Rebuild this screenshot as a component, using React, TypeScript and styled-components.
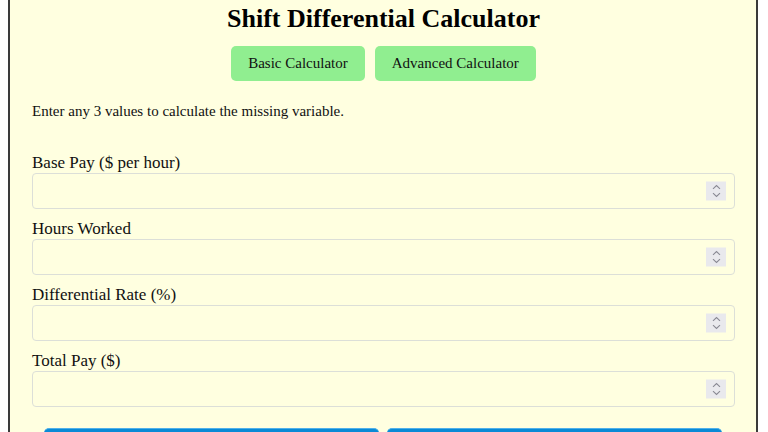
import React from "react";
import styled, { createGlobalStyle } from "styled-components";

const GlobalStyle = createGlobalStyle`
  html, body {
    margin: 0;
    padding: 0;
    background: #ffffff;
  }
  body {
    margin: 0 8px 8px 8px;
    font-family: "Liberation Serif", "Times New Roman", serif;
    color: #111;
  }
`;

const Container = styled.div`
  width: 750px;
  box-sizing: border-box;
  background: #ffffe0;
  border: 2px solid #3a3a3a;
  border-top: none;
  padding: 4px 21px 20px 22px;
`;

const Title = styled.h1`
  margin: 0;
  font-size: 26px;
  font-weight: bold;
  text-align: center;
  line-height: 30px;
  color: #000;
`;

const TabRow = styled.div`
  display: flex;
  justify-content: center;
  gap: 10px;
  margin-top: 12px;
`;

const TabButton = styled.button`
  height: 35px;
  padding: 0 17px;
  border: none;
  border-radius: 5px;
  background: #90ee90;
  font-family: "Liberation Serif", "Times New Roman", serif;
  font-size: 15px;
  color: #111;
  cursor: pointer;
`;

const Intro = styled.p`
  margin: 22px 0 33px 0;
  font-size: 15px;
  line-height: 17px;
  color: #111;
`;

const Field = styled.div`
  margin-bottom: 10px;
`;

const Label = styled.label`
  display: block;
  font-size: 17px;
  line-height: 20px;
  color: #111;
`;

const InputWrap = styled.div`
  position: relative;
`;

const NumberInput = styled.input`
  display: block;
  width: 100%;
  height: 36px;
  box-sizing: border-box;
  border: 1px solid #dcdfd8;
  border-radius: 4px;
  background: transparent;
  padding: 8px;
  font-family: "Liberation Serif", "Times New Roman", serif;
  font-size: 16px;
  -moz-appearance: textfield;
  appearance: textfield;
  &::-webkit-outer-spin-button,
  &::-webkit-inner-spin-button {
    -webkit-appearance: none;
    margin: 0;
  }
`;

const Spinner = styled.span`
  position: absolute;
  right: 9px;
  top: 50%;
  transform: translateY(-50%);
  width: 20px;
  height: 19px;
  background: #e9e9ed;
  display: flex;
  flex-direction: column;
  align-items: center;
  justify-content: center;
  gap: 3px;
  pointer-events: none;
`;

const ActionRow = styled.div`
  display: flex;
  gap: 8px;
  padding: 0 13px 0 12px;
  margin-top: 21px;
`;

const ActionButton = styled.button`
  flex: 1;
  height: 46px;
  padding: 12px 0;
  border: none;
  border-top: 1px solid #4fb0ea;
  border-radius: 5px;
  background: #0a8ad6;
  color: #fff;
  font-family: "Liberation Serif", "Times New Roman", serif;
  font-size: 16px;
  line-height: 20px;
`;

const Chevron: React.FC<{ up?: boolean }> = ({ up }) => (
  <svg width="9" height="5" viewBox="0 0 9 5" fill="none">
    <path
      d={up ? "M1 4.3 L4.5 1 L8 4.3" : "M1 0.7 L4.5 4 L8 0.7"}
      stroke="#8a8a94"
      strokeWidth="1.1"
    />
  </svg>
);

const fields = [
  { id: "base", label: "Base Pay ($ per hour)" },
  { id: "hours", label: "Hours Worked" },
  { id: "rate", label: "Differential Rate (%)" },
  { id: "total", label: "Total Pay ($)" },
];

export default function App() {
  return (
    <>
      <GlobalStyle />
      <Container>
        <Title>Shift Differential Calculator</Title>
        <TabRow>
          <TabButton>Basic Calculator</TabButton>
          <TabButton>Advanced Calculator</TabButton>
        </TabRow>
        <Intro>Enter any 3 values to calculate the missing variable.</Intro>
        {fields.map((f) => (
          <Field key={f.id}>
            <Label htmlFor={f.id}>{f.label}</Label>
            <InputWrap>
              <NumberInput id={f.id} type="number" />
              <Spinner>
                <Chevron up />
                <Chevron />
              </Spinner>
            </InputWrap>
          </Field>
        ))}
        <ActionRow>
          <ActionButton>Calculate</ActionButton>
          <ActionButton>Reset</ActionButton>
        </ActionRow>
      </Container>
    </>
  );
}
